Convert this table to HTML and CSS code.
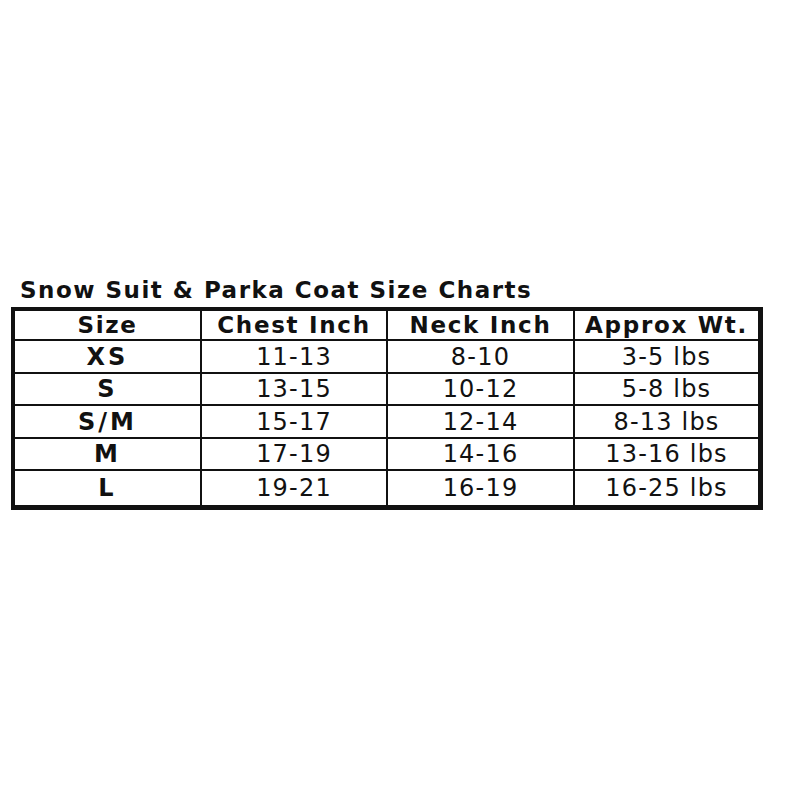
FILE: index.html
```html
<!DOCTYPE html>
<html>
<head>
<meta charset="utf-8">
<link rel="stylesheet" href="styles.css">
</head>
<body>
<div class="page">
  <h1 class="title">Snow Suit &amp; Parka Coat Size Charts</h1>
  <div class="chart">
    <div class="cell head">Size</div>
    <div class="cell head">Chest Inch</div>
    <div class="cell head">Neck Inch</div>
    <div class="cell head">Approx Wt.</div>

    <div class="cell size">XS</div>
    <div class="cell">11-13</div>
    <div class="cell">8-10</div>
    <div class="cell">3-5 lbs</div>

    <div class="cell size">S</div>
    <div class="cell">13-15</div>
    <div class="cell">10-12</div>
    <div class="cell">5-8 lbs</div>

    <div class="cell size">S/M</div>
    <div class="cell">15-17</div>
    <div class="cell">12-14</div>
    <div class="cell">8-13 lbs</div>

    <div class="cell size">M</div>
    <div class="cell">17-19</div>
    <div class="cell">14-16</div>
    <div class="cell">13-16 lbs</div>

    <div class="cell size">L</div>
    <div class="cell">19-21</div>
    <div class="cell">16-19</div>
    <div class="cell">16-25 lbs</div>
  </div>
</div>
</body>
</html>
```

FILE: styles.css
```css
html, body {
  margin: 0;
  padding: 0;
  background: #ffffff;
}

.page {
  width: 791px;
  height: 791px;
  box-sizing: border-box;
  padding-top: 277px;
  padding-left: 11px;
  font-family: "DejaVu Sans", Verdana, sans-serif;
  color: #111111;
}

.title {
  margin: 0 0 4px 9px;
  font-size: 23px;
  line-height: 26px;
  font-weight: bold;
  letter-spacing: 1.5px;
}

.chart {
  width: 752px;
  box-sizing: border-box;
  display: grid;
  grid-template-columns: 185px 184px 185px 183px;
  grid-template-rows: 28px 31px 30px 31px 30px 34px;
  gap: 2px;
  background: #111111;
  border-style: solid;
  border-color: #111111;
  border-width: 4px 5px 5px 4px;
}

.cell {
  background: #ffffff;
  display: flex;
  align-items: center;
  justify-content: center;
  font-size: 24px;
  line-height: 28px;
  letter-spacing: 1.2px;
}

.head {
  font-size: 23px;
  font-weight: bold;
  letter-spacing: 1.7px;
}

.size {
  font-size: 24px;
  font-weight: bold;
  letter-spacing: 3px;
}
```
